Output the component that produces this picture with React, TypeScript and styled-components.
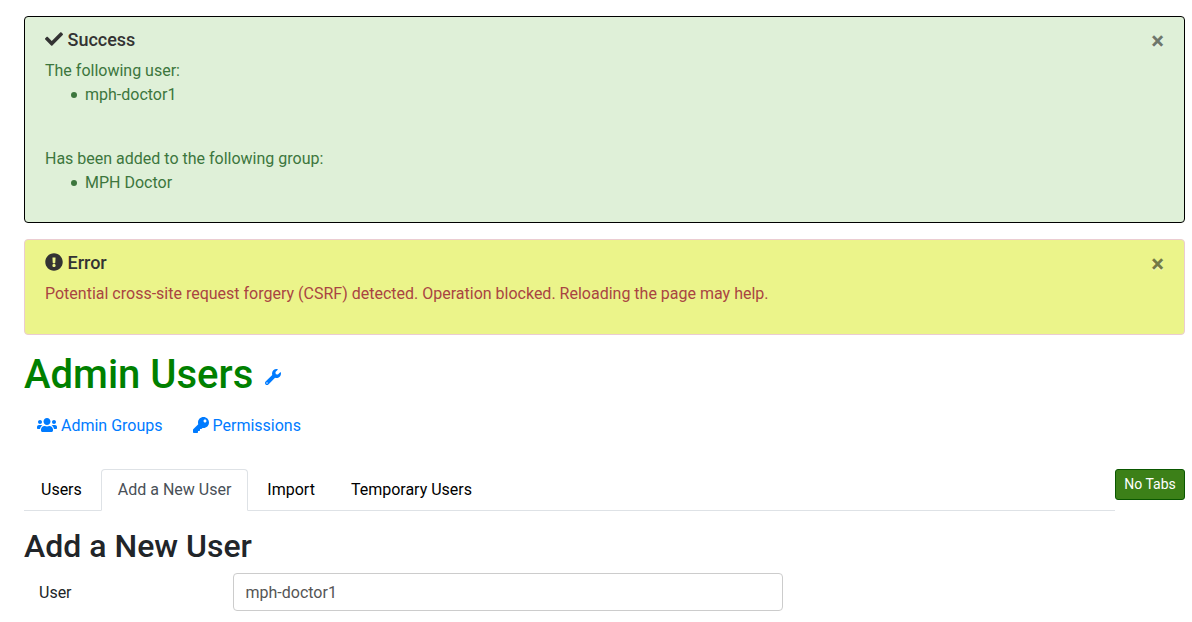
import React, { useState } from 'react';
import styled, { createGlobalStyle, css } from 'styled-components';
import { FaCheck, FaExclamationCircle, FaKey, FaUsers, FaWrench } from 'react-icons/fa';

const GlobalStyle = createGlobalStyle`
  *, *::before, *::after { box-sizing: border-box; }
  body {
    margin: 0;
    background: #fff;
    color: #212529;
    font-family: Roboto, "Liberation Sans", sans-serif;
    font-size: 16px;
    line-height: 24px;
  }
  h1, h2, h4, ul, p { margin: 0; }
`;

const Page = styled.main`
  padding: 16px 7px 11px 24px;
`;

type Tone = 'success' | 'error';

const tones = {
  success: css`
    color: #3c763d;
    background: #dff0d8;
    border-color: #000;
  `,
  error: css`
    color: #a94442;
    background: #ebf48a;
    border-color: #ebccd1;
  `,
};

const AlertBox = styled.section<{ $tone: Tone }>`
  display: flex;
  align-items: flex-start;
  justify-content: space-between;
  padding: 12px 20px;
  margin-bottom: 16px;
  border: 1px solid;
  border-radius: 4px;
  ${({ $tone }) => tones[$tone]}
`;

const AlertTitle = styled.h4`
  margin-bottom: 8px;
  color: #333;
  font-size: 18px;
  font-weight: 500;
  line-height: 22px;

  svg { vertical-align: -0.125em; }
`;

const AlertText = styled.p<{ $spaced?: boolean }>`
  margin-bottom: ${({ $spaced }) => ($spaced ? '16px' : '0')};
`;

const AlertList = styled.ul<{ $gap: number }>`
  padding-left: 26px;
  margin-bottom: ${({ $gap }) => $gap}px;
  list-style: none;

  li {
    display: flex;
    align-items: center;
    gap: 8px;
  }

  li::before {
    content: '';
    width: 6px;
    height: 6px;
    border-radius: 50%;
    background: currentColor;
  }
`;

const CloseButton = styled.button`
  padding: 0;
  border: 0;
  background: transparent;
  color: #000;
  font: 700 24px/24px Roboto, "Liberation Sans", sans-serif;
  text-shadow: 0 1px 0 #fff;
  opacity: 0.5;
  cursor: pointer;
`;

const PageTitle = styled.h1`
  margin-bottom: 8px;
  color: #008000;
  font-size: 40px;
  font-weight: 500;
  line-height: 48px;
`;

const TitleLink = styled.a`
  margin-left: 2px;
  color: #007bff;

  svg {
    width: 16px;
    height: 16px;
    vertical-align: middle;
  }
`;

const LinkBar = styled.nav`
  display: flex;
  gap: 4px;
  margin-bottom: 24px;
`;

const ButtonLink = styled.a`
  padding: 6px 12px;
  border: 1px solid transparent;
  color: #007bff;
  text-decoration: none;

  svg { vertical-align: -0.125em; }
`;

const UsersIcon = styled(FaUsers)`
  width: 20px;
  height: 16px;
`;

const TabBar = styled.div`
  display: flex;
  align-items: flex-start;
  margin-bottom: 16px;
`;

const TabList = styled.nav`
  display: flex;
  flex: 1;
  gap: 2px;
  border-bottom: 1px solid #dee2e6;
`;

const Tab = styled.a<{ $active?: boolean }>`
  padding: 8px 16px;
  margin-bottom: -1px;
  border: 1px solid transparent;
  border-radius: 4px 4px 0 0;
  color: #000;
  text-decoration: none;
  ${({ $active }) =>
    $active &&
    css`
      color: #495057;
      background: #fff;
      border-color: #dee2e6 #dee2e6 #fff;
    `}
`;

const SmallButton = styled.button`
  min-width: 70px;
  padding: 4px 8px;
  border: 1px solid #0a5700;
  border-radius: 3px;
  background: #3c8018;
  color: #fff;
  font: 400 14px/21px Roboto, "Liberation Sans", sans-serif;
  cursor: pointer;
`;

const SectionTitle = styled.h2`
  margin-bottom: 8px;
  font-size: 32px;
  font-weight: 500;
  line-height: 38px;
`;

const FormRow = styled.div`
  display: grid;
  grid-template-columns: repeat(12, minmax(0, 1fr));
`;

const FieldLabel = styled.label`
  grid-column: span 2;
  padding: 8px 15px 6px;
`;

const Field = styled.div`
  grid-column: span 6;
  padding: 0 15px;
`;

const TextInput = styled.input`
  display: block;
  width: 100%;
  height: 38px;
  padding: 6px 12px;
  border: 1px solid #ccc;
  border-radius: 4px;
  background: #fff;
  color: #555;
  font: inherit;
`;

interface AlertProps {
  tone: Tone;
  icon: React.ReactNode;
  title: string;
  children: React.ReactNode;
}

function Alert({ tone, icon, title, children }: AlertProps) {
  const [open, setOpen] = useState(true);
  if (!open) return null;
  return (
    <AlertBox $tone={tone} role="alert">
      <div>
        <AlertTitle>
          {icon} {title}
        </AlertTitle>
        {children}
      </div>
      <CloseButton type="button" aria-label="Close" onClick={() => setOpen(false)}>
        ×
      </CloseButton>
    </AlertBox>
  );
}

const tabs = ['Users', 'Add a New User', 'Import', 'Temporary Users'];

export default function App() {
  const [active, setActive] = useState('Add a New User');
  const [user, setUser] = useState('mph-doctor1');

  return (
    <>
      <GlobalStyle />
      <Page>
        <Alert tone="success" icon={<FaCheck />} title="Success">
          <AlertText>The following user:</AlertText>
          <AlertList $gap={40}>
            <li>mph-doctor1</li>
          </AlertList>
          <AlertText>Has been added to the following group:</AlertText>
          <AlertList $gap={15}>
            <li>MPH Doctor</li>
          </AlertList>
        </Alert>
        <Alert tone="error" icon={<FaExclamationCircle />} title="Error">
          <AlertText $spaced>
            Potential cross-site request forgery (CSRF) detected. Operation blocked. Reloading the page may help.
          </AlertText>
        </Alert>

        <PageTitle>
          Admin Users{' '}
          <TitleLink href="#configure" aria-label="Configure">
            <FaWrench />
          </TitleLink>
        </PageTitle>
        <LinkBar>
          <ButtonLink href="#groups">
            <UsersIcon /> Admin Groups
          </ButtonLink>
          <ButtonLink href="#permissions">
            <FaKey /> Permissions
          </ButtonLink>
        </LinkBar>

        <TabBar>
          <TabList>
            {tabs.map((name) => (
              <Tab
                key={name}
                href="#tab"
                $active={name === active}
                aria-current={name === active ? 'page' : undefined}
                onClick={() => setActive(name)}
              >
                {name}
              </Tab>
            ))}
          </TabList>
          <SmallButton type="button">No Tabs</SmallButton>
        </TabBar>

        <SectionTitle>Add a New User</SectionTitle>
        <FormRow>
          <FieldLabel htmlFor="user">User</FieldLabel>
          <Field>
            <TextInput id="user" value={user} onChange={(e) => setUser(e.target.value)} />
          </Field>
        </FormRow>
      </Page>
    </>
  );
}
